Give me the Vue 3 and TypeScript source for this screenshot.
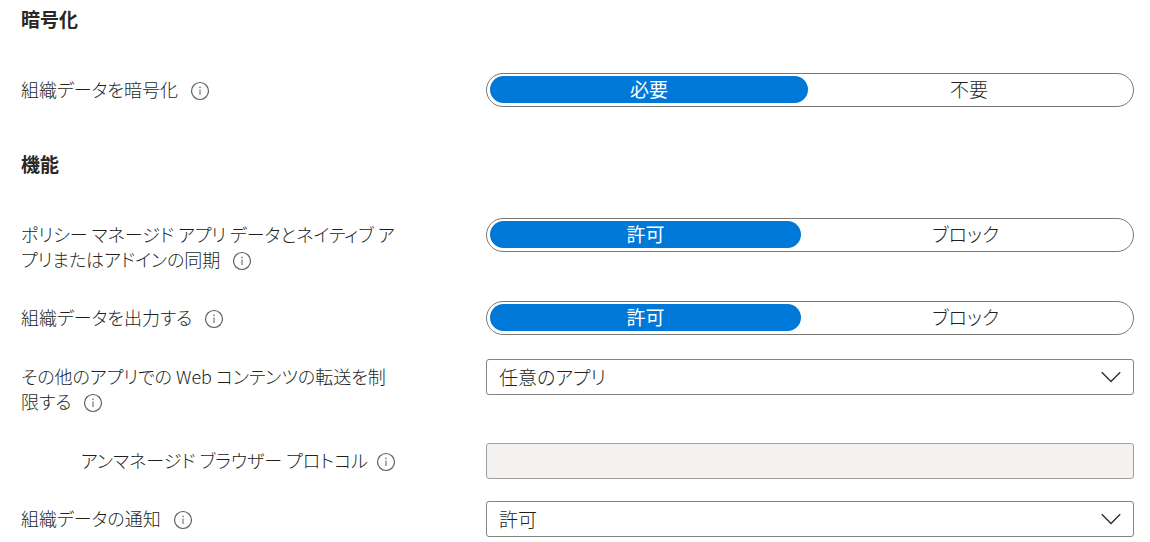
<script setup lang="ts">
import { reactive } from 'vue'

interface Field {
  id: string
  label: string
  kind: 'toggle' | 'select' | 'text'
  options: string[]
  weights?: number[]
  nested?: boolean
}

interface Section {
  title: string
  fields: Field[]
}

const sections: Section[] = [
  {
    title: '暗号化',
    fields: [
      { id: 'encrypt', label: '組織データを暗号化', kind: 'toggle', options: ['必要', '不要'], weights: [318, 322] },
    ],
  },
  {
    title: '機能',
    fields: [
      {
        id: 'sync',
        label: 'ポリシー マネージド アプリ データとネイティブ アプリまたはアドインの同期',
        kind: 'toggle',
        options: ['許可', 'ブロック'],
        weights: [311, 329],
      },
      { id: 'print', label: '組織データを出力する', kind: 'toggle', options: ['許可', 'ブロック'], weights: [311, 329] },
      {
        id: 'web',
        label: 'その他のアプリでの Web コンテンツの転送を制限する',
        kind: 'select',
        options: ['任意のアプリ', 'Microsoft Edge', 'アンマネージド ブラウザー'],
      },
      { id: 'protocol', label: 'アンマネージド ブラウザー プロトコル', kind: 'text', options: [], nested: true },
      { id: 'notify', label: '組織データの通知', kind: 'select', options: ['許可', '組織データのブロック', 'ブロック'] },
    ],
  },
]

const values = reactive<Record<string, string>>({
  encrypt: '必要',
  sync: '許可',
  print: '許可',
  web: '任意のアプリ',
  protocol: '',
  notify: '許可',
})
</script>

<template>
  <main class="settings">
    <section v-for="section in sections" :key="section.title" class="section">
      <h2 class="title">{{ section.title }}</h2>
      <div class="rows">
        <div v-for="field in section.fields" :key="field.id" class="row">
          <div class="caption" :class="{ nested: field.nested, boxed: field.kind === 'select' }">
            <span v-if="field.kind === 'toggle'" :id="field.id + '-label'">{{ field.label }}</span>
            <label v-else :for="field.id">{{ field.label }}</label>
            <button type="button" class="info" :aria-label="field.label + ' の情報'">
              <svg viewBox="0 0 20 20" width="20" height="20" fill="none" aria-hidden="true">
                <circle cx="10" cy="10" r="8.5" stroke="#605e5c" stroke-width="1.2" />
                <path d="M10 8.6V14" stroke="#7a7877" stroke-width="1.2" />
                <circle cx="10" cy="6.4" r="0.8" fill="#7a7877" />
              </svg>
            </button>
          </div>

          <div v-if="field.kind === 'toggle'" class="toggle" role="radiogroup" :aria-labelledby="field.id + '-label'">
            <label
              v-for="(option, i) in field.options"
              :key="option"
              class="segment"
              :class="{ on: values[field.id] === option }"
              :style="{ flexGrow: field.weights?.[i] ?? 1 }"
            >
              <input v-model="values[field.id]" type="radio" :name="field.id" :value="option" />
              {{ option }}
            </label>
          </div>

          <div v-else-if="field.kind === 'select'" class="dropdown">
            <select :id="field.id" v-model="values[field.id]" class="box">
              <option v-for="option in field.options" :key="option">{{ option }}</option>
            </select>
            <svg class="chevron" viewBox="0 0 20 12" width="20" height="12" fill="none" aria-hidden="true">
              <path d="M0.8 1.3L10 10.5L19.2 1.3" stroke="#323130" stroke-width="1.4" />
            </svg>
          </div>

          <input v-else :id="field.id" v-model="values[field.id]" type="text" class="box" disabled />
        </div>
      </div>
    </section>
  </main>
</template>

<style>
body {
  margin: 0;
  background: #fff;
}
</style>

<style scoped>
.settings {
  box-sizing: border-box;
  padding: 6px 16px 5px 21px;
  color: #201f1e;
  font-family: 'Noto Sans CJK JP', sans-serif;
  font-size: 18px;
  font-weight: 300;
  line-height: 25px;
  font-feature-settings: 'palt';
}
.section + .section {
  margin-top: 42px;
}
.title {
  margin: 0 0 42px;
  color: #292827;
  font-size: 19px;
  font-weight: 700;
  line-height: 25px;
}
.rows {
  display: flex;
  flex-direction: column;
  gap: 22px;
}
.row {
  display: grid;
  grid-template-columns: 380px minmax(0, 1fr);
  column-gap: 85px;
  align-items: start;
}
.caption {
  padding: 4px 0 7px;
  word-break: break-all;
}
.caption.boxed {
  padding: 5px 0 7px;
}
.caption.nested {
  padding: 5px 0 6px 60px;
}
.info {
  display: inline-block;
  width: 20px;
  height: 20px;
  margin: 0 0 0 12px;
  padding: 0;
  border: 0;
  background: none;
  vertical-align: -4px;
}
.caption.nested .info {
  margin-left: 8px;
}
.info svg {
  display: block;
}
.toggle {
  display: flex;
  box-sizing: border-box;
  height: 34px;
  padding: 2px 3px 3px;
  border: 1px solid #7a7877;
  border-radius: 17px;
  font-size: 19px;
}
.segment {
  position: relative;
  flex: 1 1 0;
  border-radius: 14px;
  line-height: 26px;
  text-align: center;
}
.segment.on {
  background: #0078d7;
  color: #fff;
  font-weight: 400;
}
.segment input {
  position: absolute;
  inset: 0;
  margin: 0;
  opacity: 0;
}
.dropdown {
  position: relative;
  font-size: 19px;
}
.box {
  display: block;
  box-sizing: border-box;
  width: 100%;
  height: 36px;
  margin: 0;
  padding: 0 44px 2px 12px;
  border: 1px solid #868483;
  border-radius: 3px;
  appearance: none;
  background: #fff;
  color: inherit;
  font: inherit;
  font-feature-settings: inherit;
}
.box:disabled {
  border-color: #a19f9d;
  background: #f3f2f1;
}
.chevron {
  position: absolute;
  top: 12px;
  right: 13px;
  pointer-events: none;
}
</style>
